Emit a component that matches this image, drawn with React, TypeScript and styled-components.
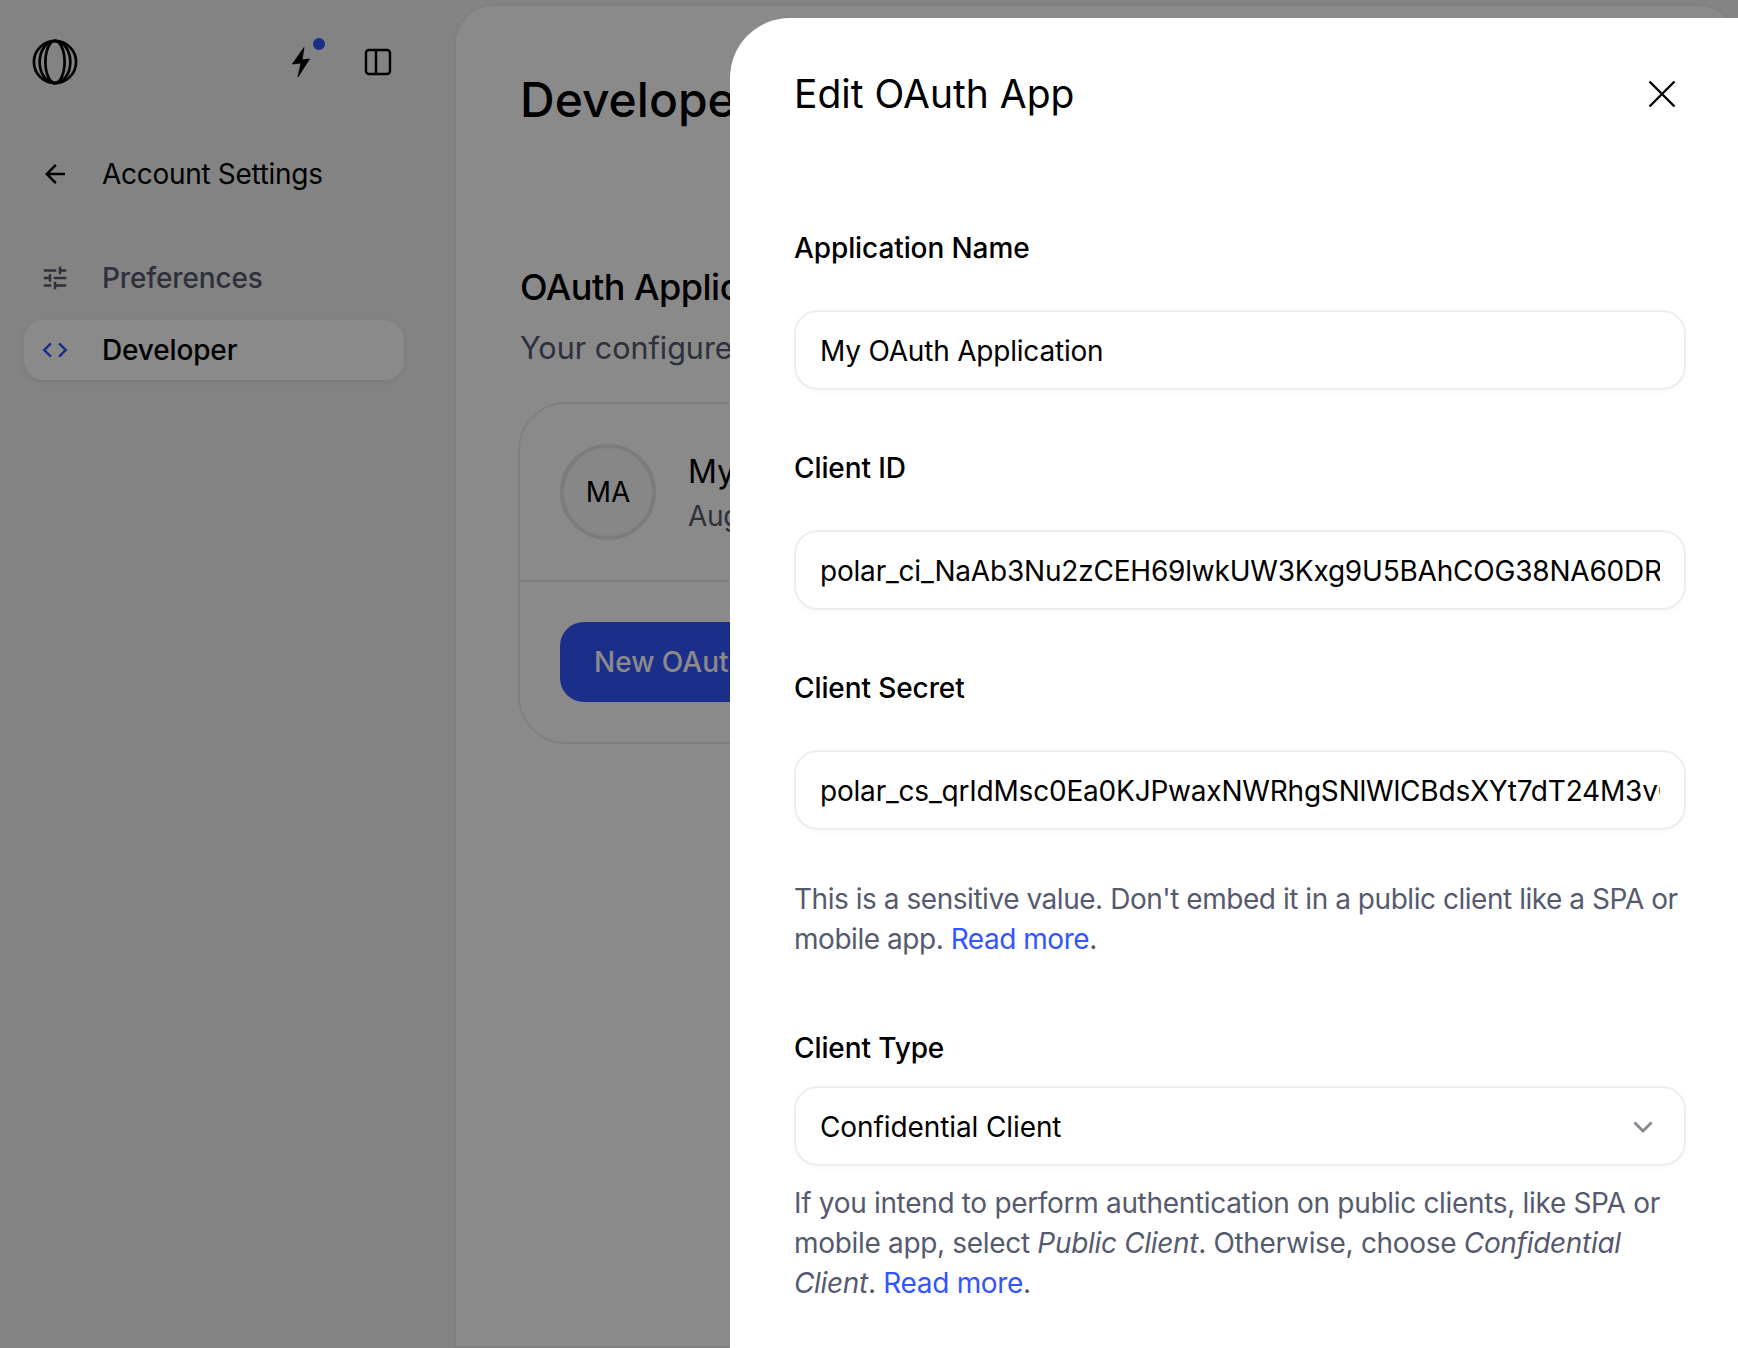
import React, { FunctionComponent } from "react";
import styled, { createGlobalStyle } from "styled-components";

const GlobalStyle = createGlobalStyle`
  html, body {
    margin: 0;
    height: 100%;
    overflow: hidden;
    font-family: Inter, "Liberation Sans", sans-serif;
    background: #f2f2f3;
  }
  * {
    box-sizing: border-box;
  }
`;

const Logo = () => (
  <svg width="46" height="46" viewBox="0 0 48 48" fill="none" stroke="#000" strokeWidth="2.8">
    <circle cx="24" cy="24" r="22" />
    <ellipse cx="24" cy="24" rx="10" ry="22" />
    <ellipse cx="24" cy="24" rx="16" ry="22" />
  </svg>
);

const Bolt = () => (
  <svg width="40" height="40" viewBox="0 0 40 40" fill="#000" stroke="#000" strokeWidth="0.8" strokeLinejoin="round">
    <path d="M23 5.5L11.5 22l8.5-1-3 14 11.5-18-7.5 1z" />
  </svg>
);

const PanelToggle = () => (
  <svg width="28" height="28" viewBox="0 0 28 28" fill="none" stroke="#000" strokeWidth="2.4">
    <rect x="2" y="2" width="24" height="24" rx="3" />
    <path d="M12 2v24" />
  </svg>
);

const ArrowBack = () => (
  <svg width="30" height="30" viewBox="0 0 24 24" fill="#000">
    <path d="M20 11H7.83l5.59-5.59L12 4l-8 8 8 8 1.41-1.41L7.83 13H20v-2z" />
  </svg>
);

const Tune = () => (
  <svg width="30" height="30" viewBox="0 0 24 24" fill="#555a6e">
    <path d="M3 17v2h6v-2H3zM3 5v2h10V5H3zm10 16v-2h8v-2h-8v-2h-2v6h2zM7 9v2H3v2h4v2h2V9H7zm14 4v-2H11v2h10zm-6-4h2V7h4V5h-4V3h-2v6z" />
  </svg>
);

const Code = () => (
  <svg width="30" height="30" viewBox="0 0 24 24" fill="#3355ff">
    <path d="M9.4 16.6L4.8 12l4.6-4.6L8 6l-6 6 6 6 1.4-1.4zm5.2 0l4.6-4.6-4.6-4.6L16 6l6 6-6 6-1.4-1.4z" />
  </svg>
);

const CloseIcon = () => (
  <svg width="28" height="28" viewBox="0 0 28 28" fill="none" stroke="#000" strokeWidth="2.4">
    <path d="M1.5 1.5l25 25M26.5 1.5l-25 25" />
  </svg>
);

const Chevron = () => (
  <svg width="20" height="12" viewBox="0 0 20 12" fill="none" stroke="#85868f" strokeWidth="2.8">
    <path d="M1.5 1.5L10 10l8.5-8.5" />
  </svg>
);

const Page: FunctionComponent = () => {
  return (
    <Shell>
      <GlobalStyle />
      <Sidebar>
        <SidebarTop>
          <Logo />
          <TopActions>
            <BoltWrap>
              <Bolt />
              <Dot />
            </BoltWrap>
            <PanelToggle />
          </TopActions>
        </SidebarTop>
        <BackLink>
          <ArrowBack />
          Account Settings
        </BackLink>
        <Nav>
          <NavItem>
            <Tune />
            Preferences
          </NavItem>
          <NavItem $active>
            <Code />
            Developer
          </NavItem>
        </Nav>
      </Sidebar>
      <Main>
        <PageTitle>Developer</PageTitle>
        <SectionTitle>OAuth Applications</SectionTitle>
        <SectionText>Your configured OAuth Applications</SectionText>
        <Card>
          <AppRow>
            <Avatar>MA</Avatar>
            <AppText>
              <AppName>My OAuth Application</AppName>
              <AppDate>August 12, 2025</AppDate>
            </AppText>
          </AppRow>
          <CardFooter>
            <PrimaryButton>New OAuth App</PrimaryButton>
          </CardFooter>
        </Card>
      </Main>
      <Backdrop />
      <Modal>
        <ModalHeader>
          <ModalTitle>Edit OAuth App</ModalTitle>
          <CloseButton>
            <CloseIcon />
          </CloseButton>
        </ModalHeader>
        <Field>
          <Label>Application Name</Label>
          <Input readOnly value="My OAuth Application" />
        </Field>
        <Field>
          <Label>Client ID</Label>
          <Input readOnly value="polar_ci_NaAb3Nu2zCEH69lwkUW3Kxg9U5BAhCOG38NA60DRqLk" />
        </Field>
        <Field>
          <Label>Client Secret</Label>
          <Input readOnly value="polar_cs_qrIdMsc0Ea0KJPwaxNWRhgSNlWlCBdsXYt7dT24M3vQpZ" />
          <Help $spaced>
            This is a sensitive value. Don't embed it in a public client like a SPA or
            mobile app. <HelpLink>Read more</HelpLink>.
          </Help>
        </Field>
        <Field $tight>
          <Label>Client Type</Label>
          <SelectBox>
            Confidential Client
            <Chevron />
          </SelectBox>
          <Help>
            If you intend to perform authentication on public clients, like SPA or
            mobile app, select <em>Public Client</em>. Otherwise, choose{" "}
            <em>Confidential Client</em>. <HelpLink>Read more</HelpLink>.
          </Help>
        </Field>
      </Modal>
    </Shell>
  );
};

const Shell = styled.div`
  position: relative;
  display: flex;
  height: 100vh;
  overflow: hidden;
  padding-top: 4px;
`;
const Sidebar = styled.aside`
  flex: 0 0 454px;
  padding: 39px 24px 0;
  margin-top: -4px;
`;
const SidebarTop = styled.div`
  display: flex;
  align-items: center;
  justify-content: space-between;
  padding: 0 38px 0 8px;
`;
const TopActions = styled.div`
  display: flex;
  align-items: center;
  gap: 43px;
`;
const BoltWrap = styled.div`
  position: relative;
  display: flex;
`;
const Dot = styled.span`
  position: absolute;
  top: -4px;
  right: -4px;
  width: 12px;
  height: 12px;
  border-radius: 50%;
  background: #3355ff;
`;
const BackLink = styled.div`
  display: flex;
  align-items: center;
  gap: 32px;
  height: 60px;
  margin-top: 59px;
  padding-left: 16px;
  font-size: 28px;
  letter-spacing: -0.3px;
  color: #000;
`;
const Nav = styled.nav`
  display: flex;
  flex-direction: column;
  gap: 12px;
  margin-top: 44px;
`;
const NavItem = styled.div<{ $active?: boolean }>`
  display: flex;
  align-items: center;
  gap: 32px;
  height: 60px;
  width: 380px;
  padding-left: 16px;
  border-radius: 20px;
  font-size: 28px;
  font-weight: 500;
  letter-spacing: -0.15px;
  color: ${(p) => (p.$active ? "#000" : "#555a6e")};
  background: ${(p) => (p.$active ? "#fff" : "transparent")};
  box-shadow: ${(p) => (p.$active ? "0 2px 6px rgba(0,0,0,.08)" : "none")};
`;
const Main = styled.main`
  flex: 1;
  min-width: 0;
  padding: 62px 64px;
  background: #fff;
  border: 2px solid #ececec;
  border-radius: 40px 40px 0 0;
  overflow: hidden;
`;
const PageTitle = styled.h1`
  margin: 0;
  font-size: 48px;
  line-height: 64px;
  font-weight: 500;
  color: #000;
  white-space: nowrap;
`;
const SectionTitle = styled.h2`
  margin: 131px 0 0;
  font-size: 36px;
  line-height: 48px;
  font-weight: 500;
  letter-spacing: -0.5px;
  color: #000;
  white-space: nowrap;
`;
const SectionText = styled.p`
  margin: 13px 0 0;
  font-size: 30.5px;
  line-height: 48px;
  color: #555a6e;
  white-space: nowrap;
`;
const Card = styled.section`
  margin: 30px 0 0 -2px;
  width: 1100px;
  border: 2px solid #ececec;
  border-radius: 48px;
`;
const AppRow = styled.div`
  display: flex;
  align-items: center;
  gap: 32px;
  padding: 40px;
  border-bottom: 2px solid #ececec;
`;
const Avatar = styled.div`
  display: flex;
  align-items: center;
  justify-content: center;
  width: 96px;
  height: 96px;
  border: 4px solid #e6e6e6;
  border-radius: 50%;
  background: #f9f9f9;
  font-size: 28px;
  color: #000;
`;
const AppText = styled.div`
  padding-top: 2px;
`;
const AppName = styled.div`
  font-size: 32px;
  line-height: 44px;
  color: #000;
`;
const AppDate = styled.div`
  margin-top: 2px;
  font-size: 28px;
  line-height: 40px;
  letter-spacing: -0.3px;
  color: #555a6e;
`;
const CardFooter = styled.div`
  padding: 40px;
`;
const PrimaryButton = styled.button`
  height: 80px;
  padding: 0 34px;
  border: none;
  border-radius: 24px;
  background: #3355ff;
  color: #fff;
  font: 500 28px Inter, sans-serif;
`;
const Backdrop = styled.div`
  position: absolute;
  inset: 0;
  background: rgba(0, 0, 0, 0.46);
`;
const Modal = styled.div`
  position: absolute;
  top: 18px;
  left: 730px;
  right: 0;
  bottom: 0;
  overflow: hidden;
  padding: 0 52px 0 64px;
  background: #fff;
  border-radius: 60px 0 0 0;
`;
const ModalHeader = styled.header`
  display: flex;
  align-items: center;
  justify-content: space-between;
  height: 151px;
  padding-right: 10px;
  margin-bottom: 59px;
`;
const ModalTitle = styled.h2`
  margin: 0;
  font-size: 39px;
  font-weight: 400;
  color: #000;
`;
const CloseButton = styled.button`
  display: flex;
  padding: 1px 0 0;
  border: none;
  background: none;
`;
const Field = styled.div<{ $tight?: boolean }>`
  display: flex;
  flex-direction: column;
  margin-bottom: 58px;
  ${(p) => (p.$tight ? "margin-top: 69px;" : "")}
`;
const Label = styled.label`
  margin-bottom: 42px;
  font-size: 28px;
  line-height: 40px;
  font-weight: 500;
  letter-spacing: -0.1px;
  color: #000;
  ${Field}:last-child & {
    margin-bottom: 18px;
  }
`;
const Input = styled.input`
  height: 80px;
  padding: 2px 24px 0;
  border: 2px solid #eeeeee;
  border-radius: 24px;
  background: #fff;
  box-shadow: 0 2px 4px rgba(0, 0, 0, 0.03);
  font: 400 28px Inter, sans-serif;
  letter-spacing: -0.2px;
  color: #000;
  outline: none;
`;
const SelectBox = styled.div`
  display: flex;
  align-items: center;
  justify-content: space-between;
  height: 80px;
  padding: 2px 31px 0 24px;
  border: 2px solid #eeeeee;
  border-radius: 24px;
  background: #fff;
  box-shadow: 0 2px 4px rgba(0, 0, 0, 0.03);
  font-size: 28px;
  letter-spacing: -0.1px;
  color: #000;
`;
const Help = styled.p<{ $spaced?: boolean }>`
  margin: ${(p) => (p.$spaced ? "49px" : "17px")} 0 0;
  font-size: 28px;
  line-height: 40px;
  letter-spacing: ${(p) => (p.$spaced ? "-0.46px" : "-0.32px")};
  color: #555a6e;
`;
const HelpLink = styled.a`
  color: #3355ff;
`;

export default Page;
